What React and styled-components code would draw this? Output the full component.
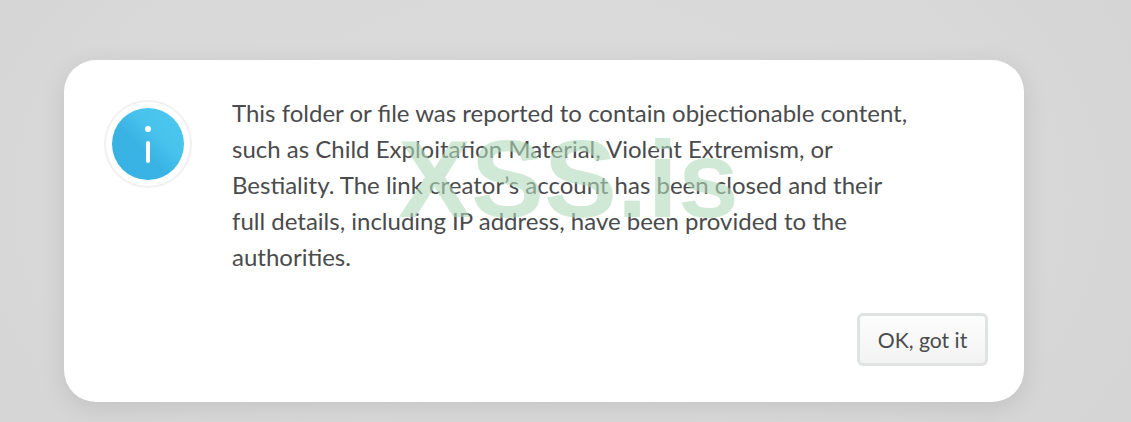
import React from 'react';
import styled, { createGlobalStyle } from 'styled-components';

const GlobalStyle = createGlobalStyle`
  html, body {
    margin: 0;
    height: 100%;
    overflow: hidden;
    background: #d5d5d5;
  }
`;

const Page = styled.div`
  width: 1131px;
  height: 422px;
  box-sizing: border-box;
  padding: 60px 107px 20px 64px;
  background: radial-gradient(ellipse 640px 420px at 540px 200px, #dbdbdb 0%, #d9d9d9 70%, #d5d5d5 100%);
  font-family: Lato, "Liberation Sans", sans-serif;
`;

const Card = styled.div`
  position: relative;
  height: 342px;
  box-sizing: border-box;
  padding: 40px 36px 36px 40px;
  display: flex;
  flex-direction: column;
  justify-content: space-between;
  background: #fff;
  border-radius: 32px;
  box-shadow: 0 6px 26px rgba(0, 0, 0, 0.1);
`;

const Body = styled.div`
  display: flex;
  gap: 40px;
`;

const IconRing = styled.div`
  flex: none;
  width: 88px;
  height: 88px;
  box-sizing: border-box;
  border: 2px solid #f0f1f1;
  border-radius: 50%;
  display: flex;
  align-items: center;
  justify-content: center;
`;

const IconDisc = styled.div`
  width: 72px;
  height: 72px;
  border-radius: 50%;
  background: linear-gradient(45deg, #37b0e2 0%, #39b3e4 42%, #47c2ec 62%, #4cc7ef 100%);
  display: flex;
  flex-direction: column;
  align-items: center;
  justify-content: center;
  gap: 9px;
`;

const InfoDot = styled.span`
  width: 6px;
  height: 6px;
  border-radius: 50%;
  background: #fff;
`;

const InfoBar = styled.span`
  width: 4px;
  height: 22px;
  border-radius: 2px;
  background: #fff;
`;

const Message = styled.p`
  margin: -5px 0 0;
  width: 680px;
  font-size: 24px;
  line-height: 36px;
  color: #4a4b4c;
`;

const Footer = styled.div`
  display: flex;
  justify-content: flex-end;
`;

const OkButton = styled.button`
  width: 131px;
  height: 53px;
  box-sizing: border-box;
  border: 3px solid #e1e2e2;
  border-radius: 6px;
  background: linear-gradient(#fdfdfd, #f3f3f3);
  color: #4a4b4c;
  font-family: inherit;
  font-size: 21.2px;
  padding: 0;
`;

const Watermark = styled.div`
  position: absolute;
  left: 334px;
  top: 57px;
  font-family: "Liberation Sans", Arial, sans-serif;
  font-weight: 700;
  font-size: 109.5px;
  line-height: 125px;
  color: rgba(177, 217, 187, 0.6);
  pointer-events: none;
`;

export default function App() {
  return (
    <Page>
      <GlobalStyle />
      <Card>
        <Body>
          <IconRing>
            <IconDisc>
              <InfoDot />
              <InfoBar />
            </IconDisc>
          </IconRing>
          <Message>
            This folder or file was reported to contain objectionable content,
            such as Child Exploitation Material, Violent Extremism, or
            Bestiality. The link creator’s account has been closed and their
            full details, including IP address, have been provided to the
            authorities.
          </Message>
        </Body>
        <Footer>
          <OkButton>OK, got it</OkButton>
        </Footer>
        <Watermark>XSS.is</Watermark>
      </Card>
    </Page>
  );
}
